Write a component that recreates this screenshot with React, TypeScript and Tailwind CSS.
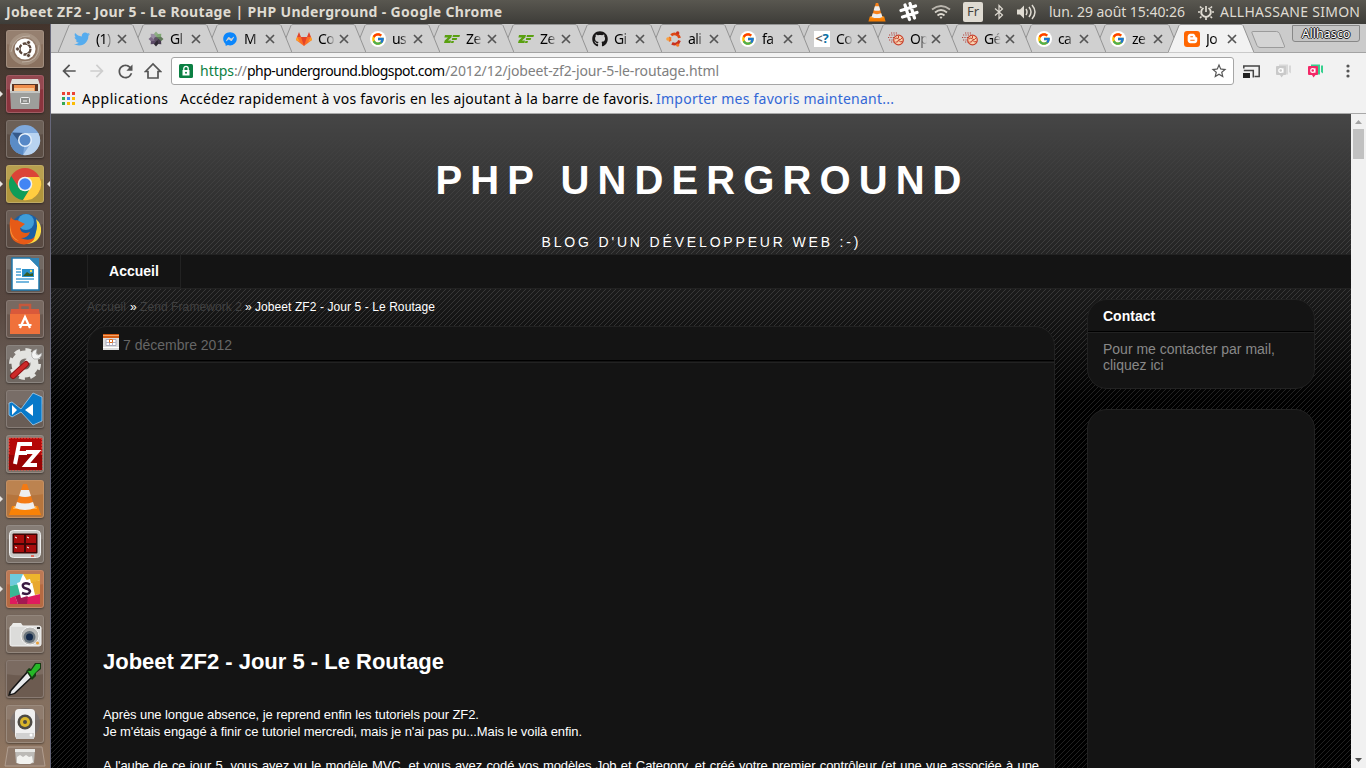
import React, { useLayoutEffect, useRef, useState } from 'react';
import { FaTwitter, FaGithub, FaFacebookMessenger, FaBloggerB } from 'react-icons/fa';
import { FcGoogle } from 'react-icons/fc';
import { MdArrowBack, MdArrowForward, MdRefresh, MdStarBorder } from 'react-icons/md';

/* One line of text whose tracking is computed so that it spans `w` pixels. */
function Fit({ w, text, className = '' }: { w: number; text: string; className?: string }) {
  const ref = useRef<HTMLSpanElement>(null);
  const [gap, setGap] = useState(0);
  useLayoutEffect(() => {
    const el = ref.current;
    if (el) setGap((w - el.getBoundingClientRect().width) / (text.length - 1));
  }, [w, text]);
  return (
    <span className={`block shrink-0 ${className}`} style={{ width: w }}>
      <span ref={ref} className="inline-block whitespace-pre" style={{ letterSpacing: gap, marginRight: -gap }}>
        {text}
      </span>
    </span>
  );
}

const ui = "font-['Noto_Sans',sans-serif]";

function Cone({ className = '' }: { className?: string }) {
  return (
    <svg viewBox="0 0 20 22" className={className}>
      <path d="M2 16h16l1.500 5.500h-19z" fill="#f57c00" />
      <path d="M3 16h14l.5 2h-15z" fill="#ffa126" />
      <path d="M8.700 1h2.600l4.700 16q-6 3-12 0z" fill="#f7821b" />
      <path d="M7.700 4.500h4.600l1.400 4.500q-3.700 1.400-7.400 0zM5.300 12.500q4.700 1.800 9.400 0l1.300 4q-6 2.600-12 0z" fill="#eceef0" />
    </svg>
  );
}

function Splat({ colors }: { colors: string[] }) {
  return (
    <svg viewBox="0 0 16 16" className="size-4">
      {colors.map((c, i) => (
        <g key={i} transform={`rotate(${i * 45} 8 8)`}>
          <path d="M6.300 7 5.800 3 8 .5 10.200 3 9.700 7z" fill={c} />
        </g>
      ))}
      <circle cx="8" cy="8" r="2" fill="#5d5363" />
    </svg>
  );
}

function Gitlab() {
  return (
    <svg viewBox="0 0 16 16" className="size-4">
      <path d="M8 15 0 9l1-3h14l1 3z" fill="#fc6d26" />
      <path d="M8 15 5 6h6z" fill="#e24329" />
      <path d="M1 6 3 1l2 5zM15 6l-2-5-2 5z" fill="#e24329" />
      <path d="M0 9 1 6l3 5zM16 9l-1-3-3 5z" fill="#fca326" />
    </svg>
  );
}

function Zend() {
  return (
    <svg viewBox="0 0 16 16" className="size-4">
      <path d="M1 4h7L7.300 6.500 4 9.500h3L6.500 12H0l.7-2.500L4 6.500H.4zM9 4h7l-.6 2H8.500zM8.200 7h5l-.6 2H7.800zM7.400 10H10l-.6 2H7z" fill="#59a010" />
    </svg>
  );
}

function Brain() {
  return (
    <svg viewBox="0 0 16 16" className="size-4" fill="none">
      <circle cx="10.500" cy="9" r="4.800" fill="#f7d3b0" stroke="#c9402c" strokeWidth="1.200" />
      <path d="M7 8q2-2 3.500 0t3.500-1M7.500 11q2.500 1 3-2 1.500 3 4 1.500M10.500 5v2" stroke="#c9402c" strokeWidth="1" />
      <path d="M1 4h8M0 6.500h6M1 9h4M3 2h7M3 11h3" stroke="#b3453c" strokeWidth="1.200" strokeDasharray="1.200 1.200" />
    </svg>
  );
}

function UbuntuRing() {
  return (
    <svg viewBox="0 0 16 16" className="size-4">
      <g fill="none" strokeWidth="2.800">
        <path d="M5.200 4.300A5 5 0 0 1 13.500 7" stroke="#dd4814" />
        <path d="M13.500 9.500A5 5 0 0 1 6 12.300" stroke="#c9301c" />
        <path d="M4.200 10.300A5 5 0 0 1 4.200 6" stroke="#f47421" />
      </g>
      <circle cx="1.900" cy="8" r="1.700" fill="#f9a03f" />
      <circle cx="11.700" cy="1.900" r="1.700" fill="#c9301c" />
      <circle cx="11.700" cy="14.100" r="1.700" fill="#f47421" />
    </svg>
  );
}

const Google = () => (
  <span className="flex size-4 items-center justify-center rounded-full bg-white">
    <FcGoogle size={14} />
  </span>
);

const tabs: { icon: React.ReactNode; label: string }[] = [
  { icon: <FaTwitter size={16} color="#55acee" />, label: '(1)' },
  { icon: <Splat colors={['#8fae86', '#7fa873', '#5f7a58', '#463b4e', '#2f2a33', '#5b4a66', '#7b6a85', '#9a8ea3']} />, label: 'Gl' },
  { icon: <FaFacebookMessenger size={14} color="#0a86fc" />, label: 'M' },
  { icon: <Gitlab />, label: 'Co' },
  { icon: <Google />, label: 'us' },
  { icon: <Zend />, label: 'Ze' },
  { icon: <Zend />, label: 'Ze' },
  { icon: <FaGithub size={16} color="#191717" />, label: 'Gi' },
  { icon: <UbuntuRing />, label: 'ali' },
  { icon: <Google />, label: 'fa' },
  {
    icon: (
      <span className="flex size-4 items-center justify-center bg-white text-[13px] leading-none font-bold text-[#666]">
        &lt;<span className="text-[#0b6fa4]">?</span>
      </span>
    ),
    label: 'Co',
  },
  { icon: <Brain />, label: 'Op' },
  { icon: <Brain />, label: 'Gé' },
  { icon: <Google />, label: 'ca' },
  { icon: <Google />, label: 'ze' },
  {
    icon: (
      <span className="flex size-4 items-center justify-center rounded-[3px] bg-[#f60] text-white">
        <FaBloggerB size={11} />
      </span>
    ),
    label: 'Jo',
  },
];

function Tab({ icon, label, index }: { icon: React.ReactNode; label: string; index: number }) {
  const active = index === tabs.length - 1;
  return (
    <div className="relative flex h-[29px] w-[74px] shrink-0 items-center pl-[16px]" style={{ zIndex: active ? 30 : 20 - index }}>
      <svg viewBox="0 0 86 29" className="absolute top-0 left-0 -z-10 h-[29px] w-[86px]">
        <path d="M0 28.500 11 1.500Q11.500.5 13 .5H73q1.500 0 2 1L86 28.500" fill={active ? '#f2f2f2' : '#d0d0d0'} stroke="#949494" />
        {!active && <path d="M0 28.500h86" stroke="#a3a3a3" />}
      </svg>
      <span className="flex size-4 items-center justify-center">{icon}</span>
      <span className={`ml-[6px] w-[20px] text-[14px] tracking-[-0.6px] whitespace-nowrap text-black [mask-image:linear-gradient(90deg,#000_8px,transparent_17px)] ${ui}`}>
        {label}
      </span>
      <svg viewBox="0 0 8 8" className="ml-[2px] size-2 shrink-0 overflow-visible">
        <path d="M0 0 8 8M8 0 0 8" stroke="#555" strokeWidth="1.700" />
      </svg>
    </div>
  );
}

const launcher: { bg: string; run?: boolean; focus?: boolean; art: React.ReactNode }[] = [
  {
    bg: 'bg-[#8b7260]',
    art: (
      <>
        <circle cx="19" cy="19" r="14" fill="none" stroke="#b6a596" strokeWidth="4" opacity=".5" />
        <path d="M5 22Q8 5 24 6M33 15q0 18-17 17" stroke="#c8bbaf" fill="none" opacity=".7" />
        <circle cx="19" cy="19" r="10.500" fill="#fff" />
        <circle cx="19" cy="19" r="5.500" fill="none" stroke="#5a463b" strokeWidth="2.300" strokeDasharray="10 1.500" />
        <g fill="#5a463b" stroke="#fff" strokeWidth=".7">
          <circle cx="11.500" cy="19" r="2" />
          <circle cx="22.500" cy="12.500" r="2" />
          <circle cx="22.500" cy="25.500" r="2" />
        </g>
      </>
    ),
  },
  {
    bg: 'bg-[#8a343d]',
    run: true,
    art: (
      <>
        <path d="M6 4h26l2 6v7H4v-7z" fill="#deded8" />
        <path d="M6 9h26v8H6z" fill="#5a3525" />
        <path d="M8 10h21v7H8z" fill="#ef8e4c" />
        <path d="M8 13h20v4H8z" fill="#f8c48f" />
        <path d="M4 16h30l-1 18H5z" fill="#9d9e9b" />
        <path d="M4 16h30v2H4z" fill="#c4c5c2" />
        <rect x="14.500" y="22.500" width="9" height="6" rx="1" fill="#8b8c89" stroke="#eee" />
        <path d="M17 26h4" stroke="#eee" />
      </>
    ),
  },
  {
    bg: 'bg-[#5c4e45]',
    art: (
      <>
        <circle cx="19" cy="20" r="15" fill="#7fa9dc" />
        <path d="M19 20 6 12.500A15 15 0 0 0 17 35z" fill="#5b8cc6" />
        <path d="M6 12.500 13 22l6-9z" fill="#35598a" />
        <path d="M19 13h13.300A15 15 0 0 1 17 35l8-12z" fill="#b8d3f0" />
        <circle cx="19" cy="20" r="7" fill="#e7f1fb" />
        <circle cx="19" cy="20" r="5.500" fill="#5688c7" />
      </>
    ),
  },
  {
    bg: 'bg-[#b1963c]',
    run: true,
    focus: true,
    art: (
      <>
        <circle cx="19" cy="19" r="16" fill="#db4437" />
        <path d="M5.200 11A16 16 0 0 0 17 35l8-12-12 0z" fill="#0f9d58" />
        <path d="M19 12h14.400A16 16 0 0 1 17 35l8-13z" fill="#ffcd40" />
        <circle cx="19" cy="19" r="7.300" fill="#f1f1f1" />
        <circle cx="19" cy="19" r="5.800" fill="#4285f4" />
      </>
    ),
  },
  {
    bg: 'bg-[#5a4b43]',
    art: (
      <>
        <circle cx="20" cy="19" r="15" fill="#1b5fa5" />
        <circle cx="20" cy="12" r="8" fill="#3f9dd8" />
        <path d="M30 9q6 5 5 13-2 12-16 12 10-3 11-12 2-6 0-13z" fill="#fddc42" />
        <path d="M5 7q2 4 6 3l2 1 6 3-5 4q1 7 10 4-2 6-9 6 8 4 14-1-2 7-11 7.500Q4 33 4 20 3 12 5 7z" fill="#e65a17" />
        <path d="M5 12q-2 14 8 19Q5 29 4 20z" fill="#f7933a" />
      </>
    ),
  },
  {
    bg: 'bg-[#625852]',
    art: (
      <>
        <path d="M6 3h18l9 9v23H6z" fill="#fff" stroke="#1d77ad" strokeWidth="1.500" />
        <path d="M23 3h10v10z" fill="#2f85b8" />
        <path d="M10 14h5M10 17h5M10 20h5M10 24h18M10 27h13" stroke="#48a0d4" strokeWidth="1.500" />
        <rect x="16" y="14" width="12" height="8" fill="#288fca" />
        <path d="m17 21 4-4 3 2 3-1v3z" fill="#355b25" />
        <circle cx="25" cy="16" r="1.200" fill="#fddc4a" />
      </>
    ),
  },
  {
    bg: 'bg-[#695850]',
    art: (
      <>
        <path d="M14 10V5h10v5" fill="none" stroke="#c6573b" strokeWidth="2.500" />
        <path d="M5 9h28l1 6H4z" fill="#d9593a" />
        <path d="M4 14h30v20H4z" fill="#f0713b" />
        <path d="m14 28 5-11 5 11M12.500 25h13" stroke="#fff" strokeWidth="2.200" fill="none" />
      </>
    ),
  },
  {
    bg: 'bg-[#6f6761]',
    art: (
      <>
        <circle cx="19" cy="19" r="9.500" fill="none" stroke="#e3e3e0" strokeWidth="8" />
        <circle cx="19" cy="19" r="13.500" fill="none" stroke="#e3e3e0" strokeWidth="5" strokeDasharray="5.500 5.100" />
        <path d="m18 20 10-10" stroke="#e4e4e4" strokeWidth="5" />
        <path d="M26 12q-2-6 5-8l-1 5 2 1 4-2q-1 7-8 6z" fill="#f3f3f3" stroke="#999" strokeWidth=".6" />
        <path d="m7 31 13-12" stroke="#8e1315" strokeWidth="6" strokeLinecap="round" />
        <path d="m7 31 13-12" stroke="#cd2929" strokeWidth="4" strokeLinecap="round" />
      </>
    ),
  },
  {
    bg: 'bg-[#695d56]',
    art: (
      <>
        <path d="m3 13 3-1 9 7L27 3l9 4v24l-9 4-12-13-9 5-3-2z" fill="#0879c9" stroke="#a9d0ee" strokeWidth=".8" />
        <path d="m6 15 5 5-5 5zM27 14v12l-8-6z" fill="#fff" />
      </>
    ),
  },
  {
    bg: 'bg-[#7a6f66]',
    art: (
      <>
        <rect x="3" y="3" width="33" height="32" fill="#b50707" stroke="#eb5a4f" strokeDasharray="2 1" />
        <path d="M3 20h33v15H3z" fill="#970303" />
        <path d="M9 29 13 9h13M11 18h10M20 17h11l-11 13h11" stroke="#fff" strokeWidth="4" fill="none" />
      </>
    ),
  },
  {
    bg: 'bg-[#b5753d]',
    run: true,
    art: (
      <>
        <path d="M6 26h26l3 9H3z" fill="#f88207" />
        <path d="M8 26h22l1 3H7z" fill="#ffb14a" />
        <path d="M17 4h4l8 24q-10 4-20 0z" fill="#f47a13" />
        <path d="M15 10h8l2 6q-6 2-12 0zM11 22q8 3 16 0l2 6q-10 4-20 0z" fill="#eee" />
      </>
    ),
  },
  {
    bg: 'bg-[#796f67]',
    art: (
      <>
        <rect x="3.500" y="5.500" width="31" height="27" rx="4" fill="#c8c9c6" stroke="#eee" />
        <rect x="6.500" y="8.500" width="25" height="20" rx="1" fill="#3d0606" />
        <path d="M8 10h10v8H8zM20 10h10v8H20zM8 20h10v7H8zM20 20h10v7H20z" fill="#a70c0c" />
        <path d="m9 12 2 1M21 12l2 1M9 22l2 1M21 22l2 1" stroke="#fff" />
        <path d="M25 31h3" stroke="#ec4b3b" strokeWidth="1.500" />
      </>
    ),
  },
  {
    bg: 'bg-[#b56a42]',
    run: true,
    art: (
      <>
        <rect x="4" y="4" width="30" height="30" rx="1" fill="#fff" />
        <path d="M4 4h13l-4 10-9 2z" fill="#6ecadc" />
        <path d="m4 16 9-2 3 10-12 4z" fill="#38b894" />
        <path d="M17 4h17v6l-11 4z" fill="#edb42d" />
        <path d="m26 12 8-2v14l-5 1z" fill="#e8a830" />
        <path d="M4 28v6h8l-3-8zM22 27l12-3v10H19z" fill="#de1b5e" />
        <path d="m9 26 10-3 3 4-1 7h-9z" fill="#a41852" />
        <path d="m11 13 13-4 4 15-13 4z" fill="#fff" />
        <path d="M24 14.500q-5-2.500-7 0-1 3 3 4t4 3q-1 4-8 1.500" stroke="#3a1b42" strokeWidth="2.500" fill="none" />
      </>
    ),
  },
  {
    bg: 'bg-[#79695d]',
    art: (
      <>
        <rect x="4" y="11" width="31" height="20" rx="2" fill="#dcdcda" stroke="#f5f5f5" />
        <path d="M7 8h8l2 3H5z" fill="#ececea" />
        <circle cx="24" cy="21" r="9" fill="#babab8" stroke="#f5f5f5" />
        <circle cx="23.500" cy="22" r="6" fill="#66717a" />
        <circle cx="23.500" cy="22" r="3.500" fill="#13294b" />
        <circle cx="31.500" cy="28" r="1.500" fill="#e99f37" />
        <path d="M31 13h3" stroke="#333" strokeWidth="2" />
      </>
    ),
  },
  {
    bg: 'bg-[#6c5b50]',
    art: (
      <>
        <path d="m2 36 1.500-5L22 10l6 6L9 34z" fill="#151515" />
        <path d="m4.500 34 1-3L22 12.500l4 3.500L8 33z" fill="#e8eaec" />
        <path d="m20 11 3-3 2 1 4-6h6v6l-5 4v3l-4 4z" fill="#163c14" />
        <path d="m22 11 3 0 5-7h4v4l-5 5-3 4z" fill="#26b827" />
      </>
    ),
  },
  {
    bg: 'bg-[#836e5e]',
    art: (
      <>
        <circle cx="19" cy="18" r="15" fill="#5e6a7c" opacity=".35" />
        <rect x="9" y="4" width="20" height="30" rx="4" fill="#f0f0f0" />
        <path d="M10 28h18v6H10z" fill="#d1d1d1" />
        <circle cx="19" cy="17" r="7.500" fill="#4c4a45" />
        <circle cx="19" cy="17" r="5" fill="#d9b62a" />
        <circle cx="19" cy="17" r="2" fill="#4c4a45" />
        <circle cx="25" cy="30" r="1.500" fill="#fff" />
      </>
    ),
  },
];

function Launcher() {
  return (
    <aside className="flex w-[51px] shrink-0 flex-col gap-[7px] overflow-hidden border-r border-[#66677a] bg-[linear-gradient(180deg,#43342c_0%,#54453d_20%,#584841_38%,#6b5f57_48%,#6f635a_62%,#7a6a5e_85%,#927761_100%)] pt-[6px]">
      {launcher.map((item, i) => (
        <div key={i} className="flex h-[38px] w-[50px] shrink-0 items-center">
          <svg viewBox="0 0 6 10" className="h-[10px] w-[6px] shrink-0">
            {item.run && <path d="M0 2 3 5 0 8z" fill="#e8e4e0" />}
          </svg>
          <span className={`relative size-[38px] shrink-0 overflow-hidden rounded-[3px] border border-white/20 shadow-[0_1px_2px_rgba(0,0,0,.4)] ${item.bg}`}>
            <svg viewBox="1 1 36 36" className="size-9">
              <path d="M0 0h38v14Q19 17 0 14z" fill="#fff" opacity=".1" />
              {item.art}
            </svg>
          </span>
          <svg viewBox="0 0 6 10" className="h-[10px] w-[6px] shrink-0">
            {item.focus && <path d="M6 2 3 5l3 3z" fill="#e8e4e0" />}
          </svg>
        </div>
      ))}
      <svg viewBox="0 0 50 22" className="-mt-[4px] h-[22px] w-[50px] shrink-0">
        <path d="M8 1h34l3 19H5z" fill="#8d7869" stroke="#b09d8f" />
        <path d="M15 3h20l-1 14q-9 2-18 0z" fill="#bcbab6" />
        <path d="M15 3h20v3H15z" fill="#e8e8e5" />
        <path d="m17 11 3-2 3 2 3-2 3 2 3-1 1 6-3 2H20l-3-1z" fill="#f2f2ef" />
      </svg>
    </aside>
  );
}

function TopBar() {
  return (
    <header className={`flex h-6 shrink-0 items-center bg-[linear-gradient(180deg,#595750,#3d3c38)] pl-[6px] text-[#dfdbd2] ${ui}`}>
      <Fit w={496} text="Jobeet ZF2 - Jour 5 - Le Routage | PHP Underground - Google Chrome" className="-mt-[2px] text-[14px] font-bold" />
      <Cone className="ml-[366px] h-[22px] w-[18px]" />
      <svg viewBox="0 0 20 20" className="ml-[13px] size-5" fill="none" strokeLinecap="round">
        <path d="m6 3 4.500 14.500M11 1.500 15.500 16M2 8.500 16.500 4M3.500 15 18 10.500" stroke="#fff" strokeWidth="3.200" />
      </svg>
      <svg viewBox="0 0 20 16" className="ml-[12px] h-4 w-5" fill="none" stroke="#bab6ae" strokeWidth="1.800">
        <path d="M1 5.500q9-7 18 0" />
        <path d="M4 8.500q6-5 12 0" stroke="#d5d1c8" />
        <path d="M6.500 11.500q3.500-3 7 0" stroke="#dfdbd2" />
        <path d="m8.500 13 1.500 2 1.500-2q-1.500-1-3 0z" fill="#dfdbd2" stroke="none" />
      </svg>
      <span className="ml-[12px] flex h-5 w-5 items-center justify-center rounded-[2px] bg-[#dfdbd2] text-[13px] text-[#44433e]">Fr</span>
      <svg viewBox="0 0 10 16" className="ml-[11px] h-4 w-[10px]">
        <path d="M1 4.500 8.500 11 5 14.500v-13L8.500 5 1 11.500" fill="none" stroke="#dfdbd2" strokeWidth="1.200" />
      </svg>
      <svg viewBox="0 0 20 16" className="ml-[13px] h-4 w-5" fill="none" stroke="#dfdbd2" strokeWidth="1.500">
        <path d="M0 5.500h3l4-4v13l-4-4H0z" fill="#dfdbd2" stroke="none" />
        <path d="M9 5q2 3 0 6M12 3q4 5 0 10M15 1q6 7 0 14" />
      </svg>
      <Fit w={136} text="lun. 29 août 15:40:26" className="-mt-px ml-[12px] text-[14px]" />
      <svg viewBox="0 0 16 16" className="ml-[13px] size-4" fill="none" stroke="#dfdbd2">
        <path d="M5.500 4A4.800 4.800 0 1 0 10.500 4" strokeWidth="2" />
        <path d="M8 2v6M2 8H0M16 8h-2M3.500 12.500l-1.500 1.500M12.500 12.500 14 14M8 13.500V16M3.500 4 2 2.500M12.500 4 14 2.500" strokeWidth="1.700" />
      </svg>
      <Fit w={140} text="ALLHASSANE SIMON" className="-mt-px ml-[6px] text-[14px]" />
    </header>
  );
}

function Chat({ front, back }: { front: string; back: string }) {
  return (
    <svg viewBox="0 0 17 14" className="h-[14px] w-[17px]">
      <path d="M4 .5h9v10H4zM14 1.500h2v8l-2-1.500z" fill={back} />
      <path d="M2 2h8q1 0 1 1v7q0 1-1 1H8.500l-2 2.500-1.500-2.500H2q-1 0-1-1V3q0-1 1-1z" fill={front} />
      <circle cx="5.700" cy="6.500" r="1.900" fill="none" stroke="#fff" strokeWidth="1.200" />
      <path d="M7.900 4.200v4.600" stroke="#fff" strokeWidth="1.200" />
    </svg>
  );
}

function BrowserChrome() {
  const dots = ['#ea4335', '#ea4335', '#ea4335', '#34a853', '#4285f4', '#fbbc05', '#34a853', '#fbbc05', '#fbbc05'];
  return (
    <div className="flex h-[90px] shrink-0 flex-col border-b border-[#a8a8a8] bg-[#f2f2f2]">
      <div className="flex h-[29px] shrink-0 bg-[linear-gradient(#cbcbcb_28px,#a3a3a3_28px)] pl-[7px]">
        {tabs.map((t, i) => (
          <Tab key={i} icon={t.icon} label={t.label} index={i} />
        ))}
        <svg viewBox="0 0 36 18" className="mt-[7px] ml-[9px] h-[18px] w-9 shrink-0">
          <path d="M1.500.5h24q2 0 3 2L33.500 15q.5 1.500-1 1.500H9q-2 0-3-2L1 2Q.5.500 1.500.5z" fill="#d4d4d4" stroke="#9b9b9b" />
        </svg>
        <span className={`mt-px ml-[5px] flex h-[17px] w-[68px] shrink-0 items-center justify-center rounded-b-[3px] border border-[#888] bg-[#c4c4c4] pt-px text-[12.500px] text-white [text-shadow:0_1px_0_#222,0_-1px_0_#222,1px_0_0_#222,-1px_0_0_#222] ${ui}`}>
          Allhasco
        </span>
      </div>
      <div className={`flex h-9 shrink-0 items-center pl-[8px] ${ui}`}>
        <MdArrowBack size={20} color="#555" />
        <MdArrowForward size={20} color="#cecece" className="ml-[8px]" />
        <MdRefresh size={21} color="#555" className="ml-[8px]" />
        <svg viewBox="0 0 18 18" className="ml-[8px] size-[18px]">
          <path d="M1.500 9.500 9 2l7.500 7.500H14v6.500H4V9.500z" fill="none" stroke="#555" strokeWidth="1.700" />
        </svg>
        <div className="ml-[9px] flex h-7 w-[1063px] items-center rounded-[3px] border border-[#a6a6a6] bg-white pl-[7px]">
          <svg viewBox="0 0 14 14" className="size-[14px]">
            <rect width="14" height="14" rx="1.500" fill="#0b8043" />
            <path d="M4.800 6V4.500a2.200 2.200 0 0 1 4.400 0V6" fill="none" stroke="#fff" strokeWidth="1.300" />
            <path d="M3.500 6h7v5.500h-7z" fill="#fff" />
            <circle cx="7" cy="8.700" r="1" fill="#0b8043" />
          </svg>
          <span className="-mt-[2px] ml-[7px] flex text-[14px]">
            <Fit w={34} text="https" className="text-[#0b8043]" />
            <Fit w={13} text="://" className="text-[#808080]" />
            <Fit w={198} text="php-underground.blogspot.com" className="text-black" />
            <Fit w={274} text="/2012/12/jobeet-zf2-jour-5-le-routage.html" className="text-[#808080]" />
          </span>
          <MdStarBorder size={18} color="#555" className="ml-[491px]" />
        </div>
        <svg viewBox="0 0 17 13" className="ml-[9px] h-[13px] w-[17px]">
          <path d="M.8 3.500V1h15.400v10.500H11.500M.8 5.500h9.500v7" fill="none" stroke="#444" strokeWidth="1.500" />
          <path d="M0 8h7v5H0z" fill="#222" />
        </svg>
        <span className="ml-[15px]">
          <Chat front="#c9c9c9" back="#d8d8d8" />
        </span>
        <span className="ml-[15px]">
          <Chat front="#f32867" back="#36d08e" />
        </span>
        <svg viewBox="0 0 4 14" className="ml-[22px] h-[14px] w-1" fill="#555">
          <circle cx="2" cy="2" r="1.600" />
          <circle cx="2" cy="7" r="1.600" />
          <circle cx="2" cy="12" r="1.600" />
        </svg>
      </div>
      <div className={`-mt-px flex h-[20px] items-center pl-[11px] text-[14px] text-black ${ui}`}>
        <svg viewBox="0 0 13 13" className="size-[13px]">
          {dots.map((c, i) => (
            <rect key={i} x={(i % 3) * 5} y={Math.floor(i / 3) * 5} width="3" height="3" fill={c} />
          ))}
        </svg>
        <Fit w={86} text="Applications" className="ml-[7px]" />
        <Fit w={473} text="Accédez rapidement à vos favoris en les ajoutant à la barre de favoris." className="ml-[12px]" />
        <Fit w={238} text="Importer mes favoris maintenant..." className="ml-[3px] text-[#3367d6]" />
      </div>
    </div>
  );
}

function Stripes() {
  return (
    <svg className="absolute inset-0 -z-10 size-full [mask-image:linear-gradient(transparent_15px,#000_150px)]" shapeRendering="crispEdges">
      <defs>
        <pattern id="stripes" width="5" height="5" patternUnits="userSpaceOnUse">
          {[0, 1, 2, 3, 4].map((i) => (
            <rect key={i} x={i} y={4 - i} width="1" height="1" fill="#fff" fillOpacity=".13" />
          ))}
        </pattern>
      </defs>
      <rect width="100%" height="100%" fill="url(#stripes)" />
    </svg>
  );
}

function Blog() {
  return (
    <div className="relative isolate flex min-w-0 flex-1 flex-col overflow-hidden bg-[linear-gradient(180deg,#464646_0,#242424_140px,#000_290px)] font-['Liberation_Sans',sans-serif] text-white">
      <Stripes />
      <div className="flex h-[140px] shrink-0 flex-col items-center pr-[5px]">
        <Fit w={526} text="PHP UNDERGROUND" className="mt-[42px] h-[48px] text-[40px] leading-[48px] font-bold" />
        <Fit w={317} text="BLOG D'UN DÉVELOPPEUR WEB :-)" className="mt-[29px] ml-[3px] h-[18px] text-[14px] leading-[18px]" />
      </div>
      <nav className="flex h-[35px] shrink-0 border-y border-[#222] bg-[#141414] pl-[36px]">
        <a className="flex w-[94px] items-center justify-center border-x border-b border-[#222] text-[14px] font-bold">Accueil</a>
      </nav>
      <main className="flex min-h-0 flex-1 items-start pr-9 pl-[36px]">
        <div className="flex w-[968px] shrink-0 flex-col">
          <div className="mt-[10px] flex h-4 text-[12px] leading-4 text-white">
            <Fit w={39} text="Accueil" className="text-[#404040]" />
            <span className="ml-[4px] w-[10px]">»</span>
            <Fit w={102} text="Zend Framework 2" className="text-[#404040]" />
            <span className="ml-[3px] w-[10px]">»</span>
            <Fit w={180} text="Jobeet ZF2 - Jour 5 - Le Routage" />
          </div>
          <article className="mt-[11px] h-[700px] rounded-[20px] border border-[#222] bg-[#141414]">
            <div className="flex h-[34px] items-center border-b border-black pl-[15px] text-[14px] text-[#666]">
              <svg viewBox="0 0 16 16" className="-mt-[3px] mr-[4px] size-4">
                <path d="M0 0h16v16H0z" fill="#ddd" />
                <path d="M0 0h16v4H0z" fill="#d35b12" />
                <path d="M0 1h16v1H0z" fill="#f5a265" />
                <path d="M3 5.500h10v6H3z" fill="#fff" stroke="#aab" />
                <path d="M3 8.500h10M6.500 5.500v6M9.500 5.500v6" stroke="#b3b3c6" />
                <path d="M6.500 5.500h3v3h-3z" fill="#fff" stroke="#de6d20" />
                <path d="M0 13.500h16" stroke="#fff" />
              </svg>
              <span className="pt-[4px]">7 décembre 2012</span>
            </div>
            <div className="mt-px border-t border-[#222] px-[15px]">
              <h2 className="mt-[286px] text-[22px] leading-[26px] font-bold">Jobeet ZF2 - Jour 5 - Le Routage</h2>
              <div className="mt-[31px] text-[13px] leading-[17px]">
                <Fit w={376} text="Après une longue absence, je reprend enfin les tutoriels pour ZF2." className="h-[17px]" />
                <Fit w={479} text="Je m'étais engagé à finir ce tutoriel mercredi, mais je n'ai pas pu...Mais le voilà enfin." className="h-[17px]" />
              </div>
              <p className="mt-[17px] text-[13px] leading-[17px] tracking-[-0.08px] whitespace-nowrap [text-align-last:justify]">
                A l'aube de ce jour 5, vous avez vu le modèle MVC, et vous avez codé vos modèles Job et Category, et créé votre premier contrôleur (et une vue associée à une
              </p>
            </div>
          </article>
        </div>
        <div className="ml-[32px] flex w-[228px] shrink-0 flex-col gap-5 pt-[10px]">
          <section className="h-[90px] rounded-[20px] border border-[#222] bg-[#141414]">
            <h3 className="flex h-[32px] items-center border-b border-black pt-[2px] pl-[15px] text-[14px] font-bold">Contact</h3>
            <p className="border-t border-[#222] px-[15px] pt-[8px] text-[14px] leading-4 text-[#888]">
              Pour me contacter par mail, cliquez ici
            </p>
          </section>
          <section className="h-[600px] rounded-[20px] border border-[#222] bg-[#141414]" />
        </div>
      </main>
    </div>
  );
}

export default function App() {
  return (
    <div className="flex h-[768px] w-[1366px] flex-col overflow-hidden bg-black">
      <TopBar />
      <div className="flex min-h-0 flex-1">
        <Launcher />
        <div className="flex min-w-0 flex-1 flex-col">
          <BrowserChrome />
          <div className="flex min-h-0 flex-1">
            <Blog />
            <div className="flex w-[15px] shrink-0 flex-col items-center bg-[#f1f1f1]">
              <svg viewBox="0 0 7 4" className="mt-[6px] h-1 w-[7px] shrink-0">
                <path d="M0 4 3.500 0 7 4z" fill="#a3a3a3" />
              </svg>
              <div className="mt-[5px] h-[30px] w-[11px] bg-[#c1c1c1]" />
              <svg viewBox="0 0 7 4" className="mt-auto mb-[6px] h-1 w-[7px] shrink-0">
                <path d="M0 0h7L3.500 4z" fill="#505050" />
              </svg>
            </div>
          </div>
        </div>
      </div>
    </div>
  );
}
